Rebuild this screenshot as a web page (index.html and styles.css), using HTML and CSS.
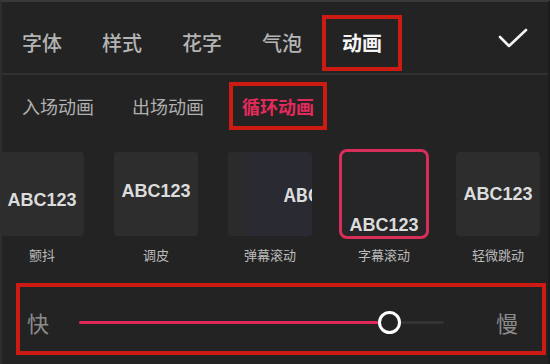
FILE: index.html
```html
<!DOCTYPE html>
<html lang="zh-CN">
<head>
    <meta charset="UTF-8">
    <meta name="viewport" content="width=device-width, initial-scale=1.0">
    <title>文字动画</title>
    <link rel="stylesheet" href="styles.css">
</head>
<body>
    <div class="panel">
        <div class="tabs">
            <span class="tab">字体</span>
            <span class="tab">样式</span>
            <span class="tab">花字</span>
            <span class="tab">气泡</span>
            <span class="tab active">动画</span>
            <svg class="done" width="30" height="22" viewBox="0 0 30 22">
                <path d="M2 10 L11 19 L28 3" fill="none" stroke="#f2f2f2" stroke-width="2.6" stroke-linecap="round" stroke-linejoin="round"/>
            </svg>
        </div>

        <div class="subtabs">
            <span class="subtab">入场动画</span>
            <span class="subtab">出场动画</span>
            <span class="subtab active">循环动画</span>
        </div>

        <div class="effects">
            <div class="effect">
                <div class="thumb low">ABC123</div>
                <span class="name">颤抖</span>
            </div>
            <div class="effect">
                <div class="thumb high">ABC123</div>
                <span class="name">调皮</span>
            </div>
            <div class="effect">
                <div class="thumb slide"><span>ABC123</span></div>
                <span class="name">弹幕滚动</span>
            </div>
            <div class="effect">
                <div class="thumb bottom selected">ABC123</div>
                <span class="name">字幕滚动</span>
            </div>
            <div class="effect">
                <div class="thumb">ABC123</div>
                <span class="name">轻微跳动</span>
            </div>
        </div>

        <div class="speed">
            <span class="speed-label">快</span>
            <div class="track">
                <div class="fill" style="width: 85%"></div>
                <div class="knob" style="left: 85%"></div>
            </div>
            <span class="speed-label">慢</span>
        </div>
    </div>
</body>
</html>
```

FILE: styles.css
```css
* {
    box-sizing: border-box;
    font-family: "Noto Sans CJK SC", "Noto Sans", sans-serif;
}

body {
    margin: 0;
    background: #232323;
}

.panel {
    width: 550px;
    height: 364px;
    border-top: 2px solid #3a3a3a;
    border-left: 2px solid #2e2e2e;
    border-right: 2px solid #1c1c1c;
    overflow: hidden;
}

.tabs {
    display: flex;
    align-items: center;
    padding-top: 10px;
    height: 73px;
    border-bottom: 2px solid #303030;
}

.tab {
    padding: 14px 16px;
    border: 4px solid transparent;
    font-size: 20px;
    line-height: 20px;
    color: #b4b4b4;
    font-weight: 500;
}

.tab.active {
    border-color: #cc1b12;
    color: #f4f4f4;
    font-weight: 700;
}

.done {
    margin-left: auto;
    margin-right: 20px;
    margin-top: -10px;
}

.subtabs {
    display: flex;
    gap: 12px;
    padding: 7px 0 0 7px;
}

.subtab {
    padding: 11px 9px;
    border: 4px solid transparent;
    font-size: 18px;
    line-height: 18px;
    color: #b0b0b0;
}

.subtab.active {
    border-color: #cc1b12;
    color: #e32a5c;
    font-weight: 700;
}

.effects {
    display: flex;
    gap: 30px;
    margin-top: 22px;
    margin-left: -2px;
}

.effect {
    display: flex;
    flex-direction: column;
    align-items: center;
    gap: 11px;
}

.thumb {
    width: 84px;
    height: 84px;
    border-radius: 4px;
    background: #2d2d2e;
    display: flex;
    align-items: center;
    justify-content: center;
    overflow: hidden;
    font-family: "Liberation Sans", Arial, sans-serif;
    font-weight: 700;
    font-size: 18px;
    color: #dcdcdc;
}

.thumb.low {
    padding-top: 12px;
}

.thumb.high {
    padding-bottom: 6px;
}

.thumb.slide {
    justify-content: flex-start;
    padding-left: 56px;
    background: linear-gradient(to right, #2b2b2c 24%, #2a2a33 24%);
}

.thumb.slide span {
    white-space: nowrap;
}

.thumb.bottom {
    align-items: flex-end;
    padding-bottom: 0;
    background: #262628;
}

.thumb.selected {
    outline: 3px solid #d92d5a;
    border-radius: 5px;
}

.name {
    font-size: 13px;
    line-height: 16px;
    color: #bcbcbc;
}

.speed {
    display: flex;
    align-items: center;
    width: 530px;
    height: 72px;
    margin: 20px 0 0 14px;
    padding: 6px 0 0 7px;
    border: 4px solid #cc1b12;
}

.speed-label {
    font-size: 22px;
    line-height: 24px;
    color: #8c8c8c;
}

.track {
    position: relative;
    width: 365px;
    height: 3px;
    margin: 0 52px 0 30px;
    background: #333;
    border-radius: 2px;
}

.fill {
    height: 100%;
    background: #e0285a;
    border-radius: 2px;
}

.knob {
    position: absolute;
    top: -10px;
    width: 23px;
    height: 23px;
    margin-left: -11px;
    border: 3px solid #fff;
    border-radius: 50%;
    background: #232323;
}
```
